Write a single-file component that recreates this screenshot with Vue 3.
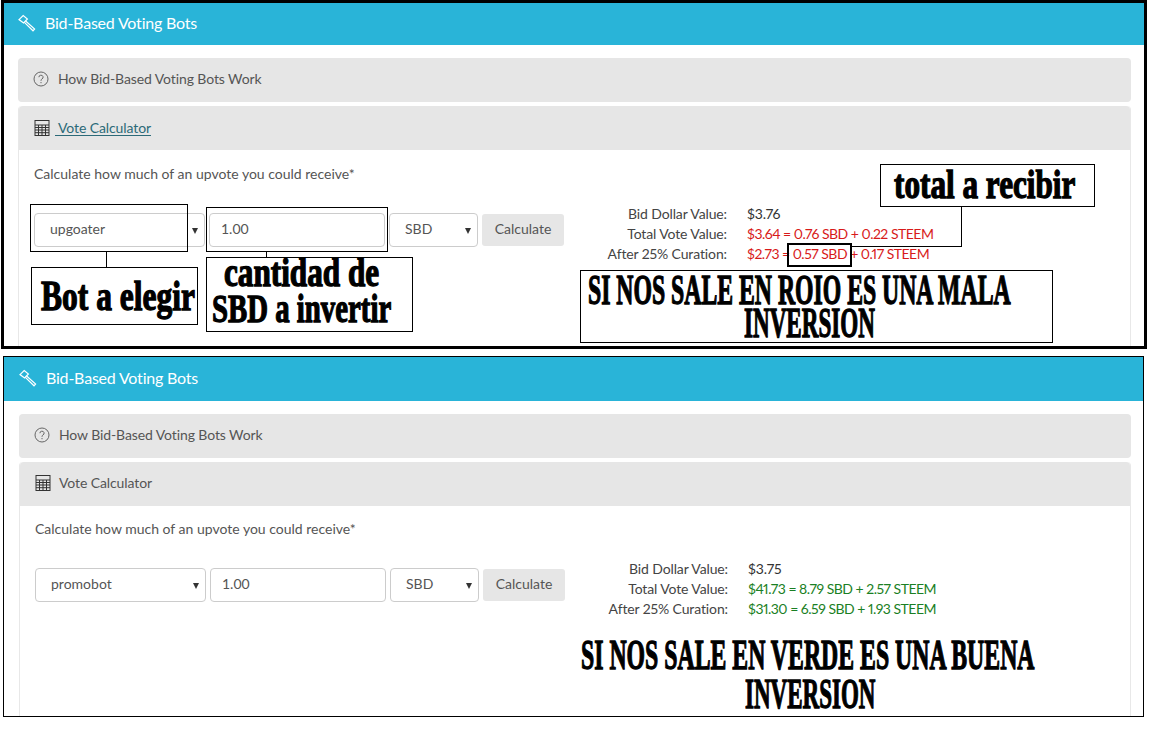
<script setup>
const panels = [
  {
    id: 'first',
    bot: 'upgoater',
    bid: '$3.76',
    total: '$3.64 = 0.76 SBD + 0.22 STEEM',
    after: '$2.73 = 0.57 SBD + 0.17 STEEM',
    tone: 'bad'
  },
  {
    id: 'second',
    bot: 'promobot',
    bid: '$3.75',
    total: '$41.73 = 8.79 SBD + 2.57 STEEM',
    after: '$31.30 = 6.59 SBD + 1.93 STEEM',
    tone: 'good'
  }
]
</script>

<template>
  <div class="page">
    <section v-for="p in panels" :key="p.id" class="panel" :class="p.id">
      <header class="title">
        <svg class="hammer" viewBox="0 0 18 18" width="18" height="18" fill="none" stroke="#fff" stroke-width="1.2">
          <path d="M1 5.6 L5.2 1.6 L9.4 5 L5.6 9 Z" />
          <path d="M7.6 7 L16.6 15 L15 16.8 L6.4 8.4" />
        </svg>
        <span>Bid-Based Voting Bots</span>
      </header>

      <div class="content">
        <div class="accordion">
          <svg viewBox="0 0 16 16" width="16" height="16" fill="none" stroke="#666" stroke-width="1">
            <circle cx="8" cy="8" r="7" />
            <path d="M5.9 6.2 A2.1 2 0 1 1 8.9 8 C8.2 8.4 8 8.8 8 9.8" />
            <path d="M8 11 V12.2" />
          </svg>
          <span class="how">How Bid-Based Voting Bots Work</span>
        </div>

        <div class="card">
          <div class="accordion open">
            <svg viewBox="0 0 16 16" width="16" height="16" fill="none" stroke="#333" stroke-width="1">
              <rect x="1" y="0.5" width="14" height="15" fill="#e6e6e6" />
              <path d="M1 5 H15 M1 7.5 H15 M1 10 H15 M1 12.7 H15 M4.5 5 V15.5 M8 5 V15.5 M11.5 5 V15.5" />
            </svg>
            <span class="calc-title">{{ p.id === 'first' ? '\u00a0' : '' }}Vote Calculator</span>
          </div>

          <div class="body">
            <p class="intro">Calculate how much of an upvote you could receive*</p>
            <div class="calc">
              <div class="controls">
                <div class="select bot">{{ p.bot }}</div>
                <input class="amount" value="1.00" />
                <div class="select currency">SBD</div>
                <button class="calc-btn">Calculate</button>
              </div>
              <div class="results">
                <div class="row">
                  <span class="label">Bid Dollar Value:</span>
                  <span class="value">{{ p.bid }}</span>
                </div>
                <div class="row">
                  <span class="label">Total Vote Value:</span>
                  <span class="value" :class="p.tone">{{ p.total }}</span>
                </div>
                <div class="row">
                  <span class="label">After 25% Curation:</span>
                  <span class="value" :class="p.tone">{{ p.after }}</span>
                </div>
              </div>
            </div>
          </div>
        </div>
      </div>

      <template v-if="p.id === 'first'">
        <div class="note box-bot"></div>
        <div class="note box-amount"></div>
        <div class="note line-bot"></div>
        <div class="note line-amount"></div>
        <div class="note label-bot impact"><span>Bot a elegir</span></div>
        <div class="note label-amount impact">
          <span class="l1">cantidad de</span>
          <span class="l2">SBD a invertir</span>
        </div>
        <div class="note label-total impact"><span>total a recibir</span></div>
        <div class="note line-total-v"></div>
        <div class="note line-total-h"></div>
        <div class="note box-sbd"></div>
        <div class="note banner impact">
          <span class="l1">SI NOS SALE EN ROIO ES UNA MALA</span>
          <span class="l2">INVERSION</span>
        </div>
      </template>
      <div v-else class="note banner-green impact">
        <span class="l1">SI NOS SALE EN VERDE ES UNA BUENA</span>
        <span class="l2">INVERSION</span>
      </div>
    </section>
  </div>
</template>

<style>
html,
body {
  background: #fff;
}
</style>

<style scoped>
.page {
  width: 1149px;
  height: 737px;
  overflow: hidden;
  background: #fff;
  font-family: Lato, "Open Sans", sans-serif;
  font-size: 14px;
  color: #555;
}

.panel {
  position: relative;
  box-sizing: border-box;
  overflow: hidden;
  background: #fff;
}

.panel.first {
  width: 1146px;
  height: 349px;
  margin-left: 1px;
  border: 3px solid #000;
}

.panel.second {
  width: 1141px;
  height: 361px;
  margin: 7px 0 0 3px;
  border: 1px solid #000;
}

.title {
  display: flex;
  align-items: center;
  gap: 9px;
  height: 42px;
  padding: 0 0 3px 14px;
  box-sizing: border-box;
  background: #29b4d8;
  color: #fff;
  font-size: 16px;
  letter-spacing: -0.2px;
}

.second .title {
  height: 44px;
  padding-left: 15px;
}

.content {
  padding: 13px 13px 0 14px;
}

.second .content {
  padding: 13px 12px 0 15px;
}

.accordion {
  display: flex;
  align-items: center;
  gap: 8px;
  box-sizing: border-box;
  height: 44px;
  padding: 0 0 3px 15px;
  background: #e6e6e6;
  border-radius: 4px;
  letter-spacing: -0.1px;
}

.how {
  margin-left: 1px;
}

.card {
  margin-top: 4px;
  border: 1px solid #e8e8e8;
  border-top: none;
  border-radius: 4px 4px 0 0;
  height: 300px;
}

.accordion.open {
  border-radius: 4px 4px 0 0;
}

.calc-title {
  color: #555;
}

.first .accordion.open {
  padding-bottom: 1px;
}

.first .calc-title {
  margin-left: -3px;
  color: #2c6a78;
  text-decoration: underline;
  text-underline-offset: 2px;
}

.body {
  padding: 15px 15px 0;
}

.second .body {
  padding-top: 14px;
}

.intro {
  margin: 0 0 30px;
  line-height: 18px;
}

.calc {
  display: flex;
}

.controls {
  display: flex;
  align-items: center;
  gap: 4px;
  height: 34px;
}

.select {
  position: relative;
  box-sizing: border-box;
  height: 34px;
  padding-bottom: 3px;
  line-height: 30px;
  background: #fff;
  border: 1px solid #ccc;
  border-radius: 4px;
}

.select::after {
  content: "";
  position: absolute;
  right: 6px;
  top: 14px;
  border-left: 3.5px solid transparent;
  border-right: 3.5px solid transparent;
  border-top: 6px solid #333;
}

.bot {
  width: 171px;
  padding-left: 15px;
}

.currency {
  width: 89px;
  padding-left: 15px;
}

.amount {
  box-sizing: border-box;
  width: 176px;
  height: 34px;
  padding: 0 11px 3px;
  border: 1px solid #ccc;
  border-radius: 4px;
  font: inherit;
  color: #555;
}

.calc-btn {
  width: 82px;
  height: 32px;
  padding: 0 0 3px;
  border: none;
  border-radius: 3px;
  background: #e6e6e6;
  font: inherit;
  color: #555;
}

.results {
  margin-top: -9px;
  color: #333;
}

.row {
  display: flex;
  gap: 20px;
  height: 20px;
  line-height: 20px;
  font-variant-numeric: proportional-nums;
  letter-spacing: -0.12px;
}

.label {
  width: 163px;
  text-align: right;
  color: #444;
}

.value {
  white-space: nowrap;
}

.bad,
.good {
  letter-spacing: -0.5px;
}

.bad {
  color: #d81a1a;
}

.good {
  color: #1a7f24;
}

.note {
  position: absolute;
  box-sizing: border-box;
}

.impact {
  font-family: "Liberation Serif", serif;
  font-weight: 700;
  color: #000;
  -webkit-text-stroke: 1.3px #000;
  white-space: nowrap;
}

/* the annotations are set in a condensed heavy face, so squeeze the serif */
.impact span {
  display: block;
  transform-origin: left center;
}

.box-bot {
  left: 26px;
  top: 201px;
  width: 158px;
  height: 48px;
  border: 1px solid #000;
}

.box-amount {
  left: 202px;
  top: 204px;
  width: 182px;
  height: 45px;
  border: 1px solid #000;
}

.line-bot {
  left: 102px;
  top: 249px;
  width: 1px;
  height: 16px;
  background: #000;
}

.line-amount {
  left: 262px;
  top: 249px;
  width: 1px;
  height: 6px;
  background: #000;
}

.label-bot {
  left: 27px;
  top: 264px;
  width: 167px;
  height: 58px;
  border: 1px solid #000;
  background: #fff;
  font-size: 42px;
  line-height: 56px;
}

.label-bot span {
  margin-left: 9px;
  transform: scaleX(0.75);
}

.label-amount {
  left: 202px;
  top: 254px;
  width: 207px;
  height: 75px;
  border: 1px solid #000;
  background: #fff;
  font-size: 40px;
  line-height: 36px;
}

.label-amount .l1 {
  margin: -3px 0 0 17px;
  transform: scaleX(0.78);
}

.label-amount .l2 {
  margin-left: 5px;
  transform: scaleX(0.72);
}

.label-total {
  left: 876px;
  top: 161px;
  width: 215px;
  height: 43px;
  border: 1px solid #000;
  background: #fff;
  font-size: 40px;
  line-height: 40px;
}

.label-total span {
  margin-left: 13px;
  transform: scaleX(0.78);
}

.line-total-v {
  left: 957px;
  top: 204px;
  width: 1px;
  height: 40px;
  background: #000;
}

.line-total-h {
  left: 846px;
  top: 243px;
  width: 112px;
  height: 1px;
  background: #000;
}

.box-sbd {
  left: 783px;
  top: 240px;
  width: 65px;
  height: 24px;
  border: 2px solid #000;
}

.banner {
  left: 576px;
  top: 267px;
  width: 473px;
  height: 73px;
  padding-top: 3px;
  border: 1px solid #000;
  background: #fff;
  font-size: 42px;
  line-height: 33px;
}

.banner .l1 {
  margin-left: 7px;
  transform: scaleX(0.565);
}

.banner .l2 {
  margin-left: 163px;
  transform: scaleX(0.55);
}

.banner-green {
  left: 576px;
  top: 278px;
  font-size: 43px;
  line-height: 39px;
}

.banner-green .l1 {
  margin-left: 1px;
  transform: scaleX(0.553);
}

.banner-green .l2 {
  margin-left: 165px;
  transform: scaleX(0.535);
}
</style>
